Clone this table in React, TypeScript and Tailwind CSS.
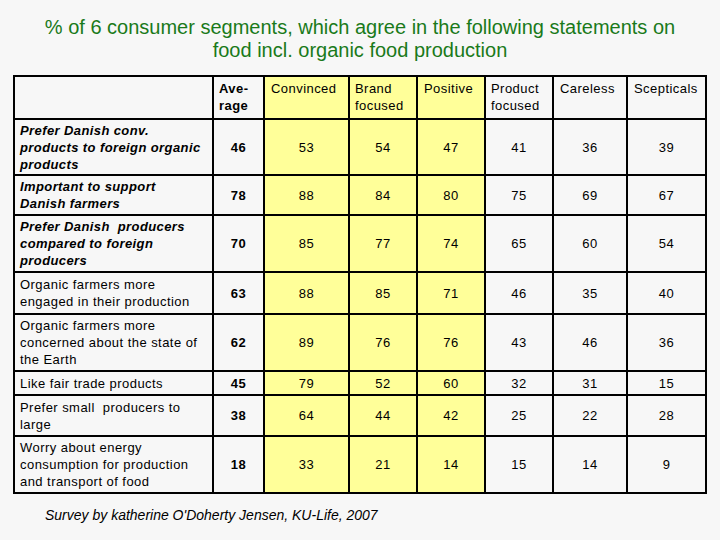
import React from "react";

type Row = { lines: string[]; bi?: boolean; h: number; avg: number; vals: number[] };

const rows: Row[] = [
  { lines: ["Prefer Danish conv.", "products to foreign organic", "products"], bi: true, h: 56, avg: 46, vals: [53, 54, 47, 41, 36, 39] },
  { lines: ["Important to support", "Danish farmers"], bi: true, h: 40, avg: 78, vals: [88, 84, 80, 75, 69, 67] },
  { lines: ["Prefer Danish\u00a0 producers", "compared to foreign", "producers"], bi: true, h: 57, avg: 70, vals: [85, 77, 74, 65, 60, 54] },
  { lines: ["Organic farmers more", "engaged in their production"], h: 42, avg: 63, vals: [88, 85, 71, 46, 35, 40] },
  { lines: ["Organic farmers more", "concerned about the state of", "the Earth"], h: 57, avg: 62, vals: [89, 76, 76, 43, 46, 36] },
  { lines: ["Like fair trade products"], h: 24, avg: 45, vals: [79, 52, 60, 32, 31, 15] },
  { lines: ["Prefer small\u00a0 producers to", "large"], h: 41, avg: 38, vals: [64, 44, 42, 25, 22, 28] },
  { lines: ["Worry about energy", "consumption for production", "and transport of food"], h: 57, avg: 18, vals: [33, 21, 14, 15, 14, 9] },
];

const font = { fontFamily: '"Liberation Sans", Arial, sans-serif' };

export default function App() {
  return (
    <div className="w-[720px] h-[540px] bg-[#f7f7f7] overflow-hidden" style={font}>
      <div className="pt-[16px] text-center text-[#1a7a1a] text-[20px] leading-[23px]">
        <div>% of 6 consumer segments, which agree in the following statements on</div>
        <div>food incl. organic food production</div>
      </div>
      <div className="pl-[13px] mt-[13px]">
        <table className="table-fixed border-collapse text-[13px] leading-[17px] tracking-[0.45px] text-black w-[694px]">
          <colgroup>
            <col className="w-[199px]" />
            <col className="w-[51px]" />
            <col className="w-[85px]" />
            <col className="w-[68px]" />
            <col className="w-[68px]" />
            <col className="w-[68px]" />
            <col className="w-[74px]" />
            <col className="w-[79px]" />
          </colgroup>
          <thead>
            <tr className="h-[43px]">
              <th className="border-2 border-black bg-[#f7f7f7]"></th>
              <th className="border-2 border-black align-top text-left font-bold px-[5px] pt-[3px]">
                Ave-<br />rage
              </th>
              <th className="border-2 border-black align-top text-left font-normal px-[6px] pt-[3px] bg-[#ffff99]">Convinced</th>
              <th className="border-2 border-black align-top text-left font-normal px-[5px] pt-[3px] bg-[#ffff99]">
                Brand<br />focused
              </th>
              <th className="border-2 border-black align-top text-left font-normal px-[6px] pt-[3px] bg-[#ffff99]">Positive</th>
              <th className="border-2 border-black align-top text-left font-normal px-[5px] pt-[3px]">
                Product<br />focused
              </th>
              <th className="border-2 border-black align-top text-left font-normal px-[6px] pt-[3px]">Careless</th>
              <th className="border-2 border-black align-top text-left font-normal px-[6px] pt-[3px]">Scepticals</th>
            </tr>
          </thead>
          <tbody>
            {rows.map((r, i) => (
              <tr key={i} style={{ height: r.h }}>
                <td
                  className={`border-2 border-black px-[5px] py-0 align-middle whitespace-nowrap ${
                    r.bi ? "font-bold italic tracking-[0.4px]" : ""
                  }`}
                >
                  {r.lines.map((l, k) => (
                    <div key={k}>{l}</div>
                  ))}
                </td>
                <td className="border-2 border-black text-center font-bold align-middle">{r.avg}</td>
                {r.vals.map((v, j) => (
                  <td
                    key={j}
                    className={`border-2 border-black text-center align-middle ${j < 3 ? "bg-[#ffff99]" : ""}`}
                  >
                    {v}
                  </td>
                ))}
              </tr>
            ))}
          </tbody>
        </table>
      </div>
      <div className="pl-[45px] mt-[12px] italic text-[14px] leading-[18px] text-black">
        Survey by katherine O'Doherty Jensen, KU-Life, 2007
      </div>
    </div>
  );
}
